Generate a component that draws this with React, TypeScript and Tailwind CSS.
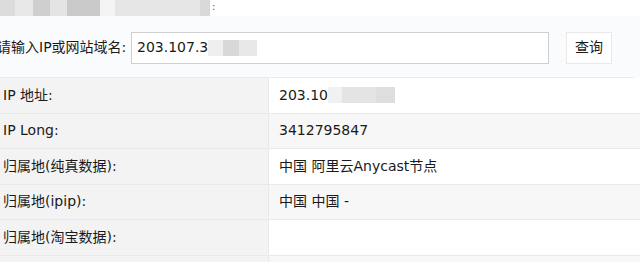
import React from "react";

const font = { fontFamily: '"DejaVu Sans", "Noto Sans CJK SC", sans-serif' };

const rows: { label: string; value: React.ReactNode; alt: boolean }[] = [
  {
    label: "IP 地址:",
    value: (
      <span className="flex items-center">
        203.10
        <span className="flex h-[16px]">
          <span className="w-[14px] bg-[#f1f1f1]" />
          <span className="w-[34px] bg-[#e4e4e4]" />
          <span className="w-[19px] bg-[#dedede]" />
        </span>
      </span>
    ),
    alt: false,
  },
  { label: "IP Long:", value: "3412795847", alt: true },
  { label: "归属地(纯真数据):", value: "中国 阿里云Anycast节点", alt: false },
  { label: "归属地(ipip):", value: "中国 中国 -", alt: true },
  { label: "归属地(淘宝数据):", value: "", alt: false },
  { label: "", value: "", alt: true },
];

export default function App() {
  return (
    <div
      className="w-[640px] h-[262px] overflow-hidden bg-[#fafbfc] text-[14px] text-[#1a1a1a]"
      style={font}
    >
      <div className="flex h-[16px] items-stretch bg-white">
        <span className="w-[15px] bg-[#dcdcdc]" />
        <span className="w-[18px] bg-[#e8e8e8]" />
        <span className="w-[17px] bg-[#cfcfcf]" />
        <span className="w-[17px] bg-[#e4e4e4]" />
        <span className="w-[33px] bg-[#cacaca]" />
        <span className="w-[15px] bg-[#f4f4f4]" />
        <span className="w-[85px] bg-[#e6e6e6]" />
        <span className="w-[10px] bg-[#d9d9d9]" />
        <span className="ml-[2px] text-[10px] leading-[14px] text-[#555]">:</span>
      </div>
      <div className="flex h-[62px] items-center pt-[2px] border-b border-[#ececec] mr-[6px]">
        <span className="-ml-[3px] w-[134px] whitespace-nowrap">请输入IP或网站域名:</span>
        <div className="flex h-[32px] w-[418px] items-center border border-[#cfcfcf] bg-white pl-[5px]">
          203.107.3
          <span className="flex h-[16px]">
            <span className="w-[15px] bg-[#efefef]" />
            <span className="w-[16px] bg-[#d8d8d8]" />
            <span className="w-[18px] bg-[#e8e8e8]" />
          </span>
        </div>
        <button className="ml-[17px] h-[32px] w-[46px] border border-[#e8e8e8] bg-white text-[14px] text-[#1a1a1a]" style={font}>
          查询
        </button>
      </div>
      <div className="grid grid-cols-[269px_1fr]">
        {rows.map((r, i) => (
          <React.Fragment key={i}>
            <div className="flex h-[35.5px] items-center border-b border-r border-[#e9e9e9] bg-[#f3f3f4] pl-[3px]">
              {r.label}
            </div>
            <div
              className={`flex h-[35.5px] items-center border-b border-[#e9e9e9] pl-[10px] ${
                r.alt ? "bg-[#f7f7f8]" : "bg-white"
              }`}
            >
              {r.value}
            </div>
          </React.Fragment>
        ))}
      </div>
    </div>
  );
}
